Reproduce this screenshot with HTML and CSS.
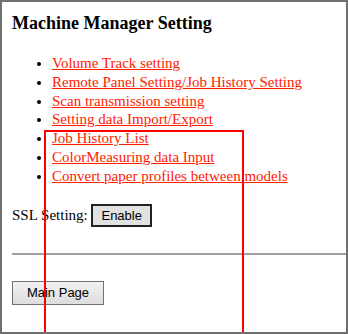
FILE: index.html
```html
<!DOCTYPE html>
<html lang="en">
<head>
  <meta charset="UTF-8">
  <title>Machine Manager Setting</title>
  <link rel="stylesheet" href="styles.css">
</head>
<body>
  <div class="frame">
    <h3>Machine Manager Setting</h3>
    <ul class="menu">
      <li><a href="#">Volume Track setting</a></li>
      <li><a href="#">Remote Panel Setting/Job History Setting</a></li>
      <li><a href="#">Scan transmission setting</a></li>
      <li><a href="#">Setting data Import/Export</a></li>
      <li><a href="#">Job History List</a></li>
      <li><a href="#">ColorMeasuring data Input</a></li>
      <li><a href="#">Convert paper profiles between models</a></li>
    </ul>
    <div class="ssl">SSL Setting: <button class="btn-enable">Enable</button></div>
    <hr>
    <button class="btn-main">Main Page</button>
    <div class="highlight"></div>
  </div>
</body>
</html>
```
FILE: styles.css
```css
html, body {
  margin: 0;
  padding: 0;
  background: #ffffff;
}
.frame {
  position: relative;
  box-sizing: border-box;
  width: 348px;
  height: 334px;
  border: 2px solid #6f6f6f;
  padding: 0 0 0 10px;
  overflow: hidden;
  font-family: "Liberation Serif", serif;
  font-size: 15px;
  color: #000;
}
h3 {
  font-size: 18px;
  font-weight: bold;
  margin: 11px 0 0 0;
}
.menu {
  margin: 20px 0 0 0;
  padding-left: 40px;
}
.menu li {
  line-height: 18.8px;
}
.menu a {
  color: #ff2200;
}
.ssl {
  margin-top: 18px;
}
.btn-enable {
  font-family: "Liberation Sans", Arial, sans-serif;
  font-size: 13px;
  padding: 2px 8px;
  background: #e1e1e1;
  border: 2px solid #222;
  color: #000;
}
hr {
  margin: 26px 0 0 0;
  border: 0;
  border-top: 2px solid #a0a0a0;
}
.btn-main {
  margin-top: 26px;
  font-family: "Liberation Sans", Arial, sans-serif;
  font-size: 13px;
  width: 92px;
  height: 24px;
  background: linear-gradient(#f2f2f2, #dcdcdc);
  border: 1px solid #707070;
  color: #000;
}
.highlight {
  position: absolute;
  left: 42px;
  top: 128px;
  width: 196px;
  height: 300px;
  border: 2px solid #ff0000;
}
```
